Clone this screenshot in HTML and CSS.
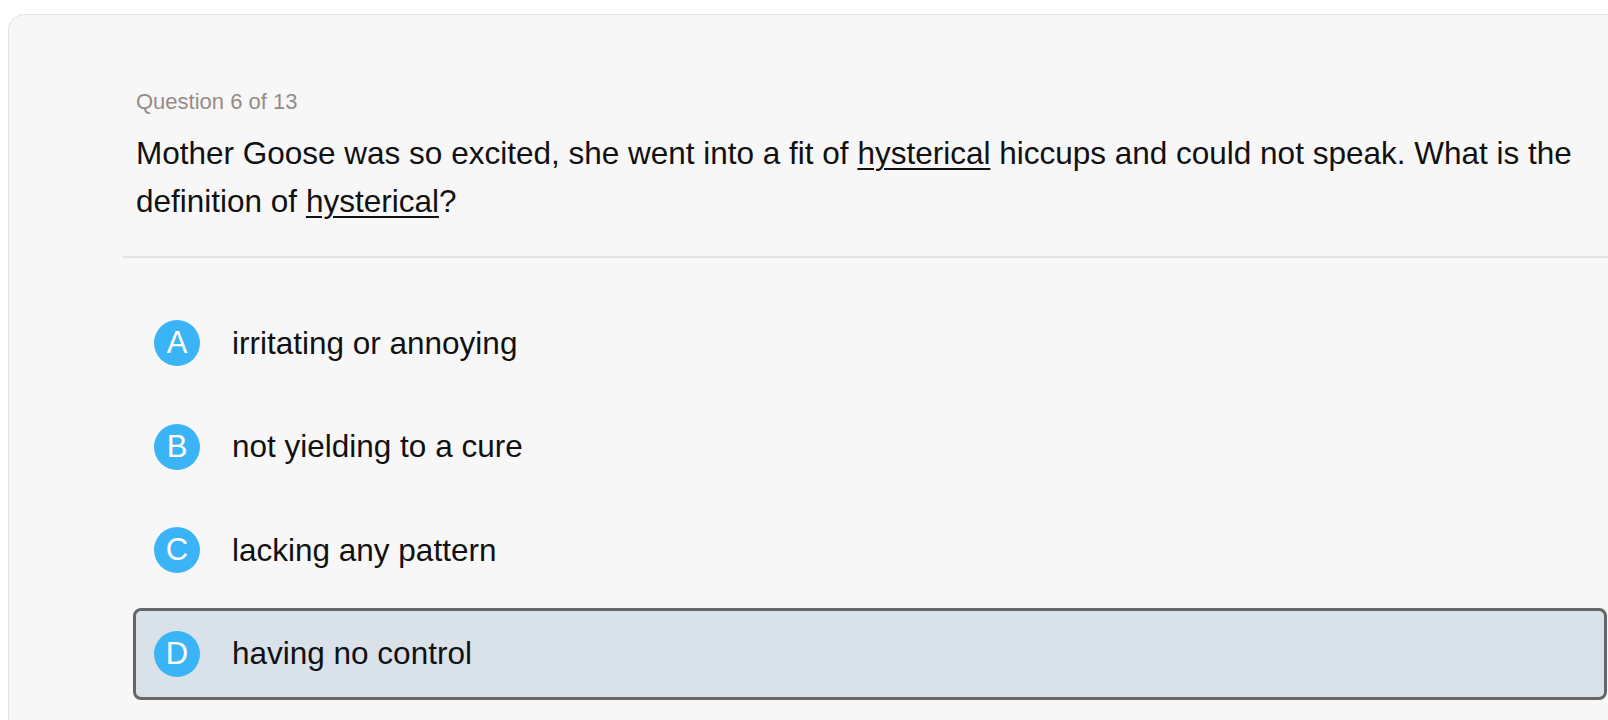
FILE: index.html
```html
<!DOCTYPE html>
<html>
<head>
<meta charset="utf-8">
<link rel="stylesheet" href="styles.css">
</head>
<body>
<div class="card">
  <div class="quiz">
    <div class="head">
      <div class="label">Question 6 of 13</div>
      <div class="question">Mother Goose was so excited, she went into a fit of <u>hysterical</u> hiccups and could not speak. What is the definition of <u>hysterical</u>?</div>
    </div>
    <div class="divider"></div>
    <div class="options">
      <div class="option"><span class="badge">A</span><span class="text">irritating or annoying</span></div>
      <div class="option"><span class="badge">B</span><span class="text">not yielding to a cure</span></div>
      <div class="option"><span class="badge">C</span><span class="text">lacking any pattern</span></div>
      <div class="option selected"><span class="badge">D</span><span class="text">having no control</span></div>
    </div>
  </div>
</div>
</body>
</html>
```
FILE: styles.css
```css
html, body {
  margin: 0;
  padding: 0;
  overflow: hidden;
  background: #ffffff;
  font-family: "Liberation Sans", Arial, sans-serif;
}
.card {
  margin: 14px 0 0 8px;
  width: 1700px;
  height: 800px;
  box-sizing: border-box;
  border: 1px solid #e2e2e2;
  border-radius: 16px;
  background: #f7f7f7;
  padding: 74px 0 0 114px;
}
.head {
  padding-left: 13px;
  width: 1460px;
}
.label {
  font-size: 22px;
  line-height: 26px;
  color: #978b86;
}
.question {
  margin-top: 15px;
  font-size: 31.5px;
  line-height: 47.5px;
  color: #111111;
}
.question u {
  text-underline-offset: 4px;
  text-decoration-thickness: 2px;
}
.divider {
  margin-top: 31px;
  height: 2px;
  background: #e2e2e2;
}
.options {
  margin-top: 39px;
  padding-left: 10px;
  display: flex;
  flex-direction: column;
  gap: 11.5px;
  width: 1474px;
}
.option {
  height: 92px;
  box-sizing: border-box;
  border: 3px solid transparent;
  border-radius: 8px;
  padding: 0 18px;
  display: flex;
  align-items: center;
  gap: 32px;
}
.option.selected {
  background: #d9e1e9;
  border-color: #666666;
}
.badge {
  width: 46px;
  height: 46px;
  border-radius: 50%;
  background: #3ab3f7;
  color: #ffffff;
  font-size: 31px;
  display: flex;
  align-items: center;
  justify-content: center;
  flex: none;
}
.text {
  font-size: 31.5px;
  color: #111111;
}
```
